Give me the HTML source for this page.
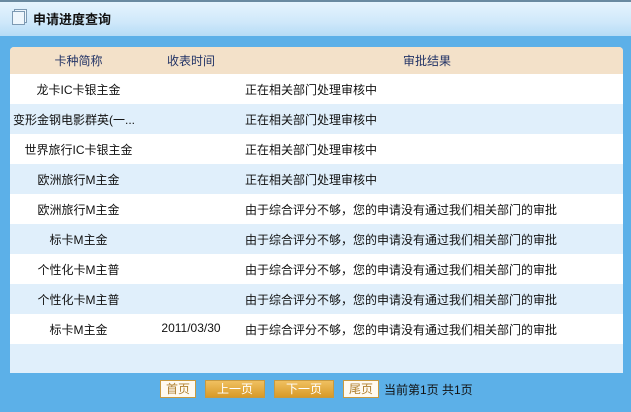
<!DOCTYPE html><html><head><meta charset="utf-8"><style>
*{margin:0;padding:0;box-sizing:border-box}
body{width:631px;height:412px;overflow:hidden;background:#5cb0e8;font-family:"Liberation Sans","Noto Sans CJK SC",sans-serif;font-size:12px;color:#111;position:relative}
.title{position:absolute;left:0;top:0;width:631px;height:36px;background:linear-gradient(#e6f4fd,#cfe8fa 60%,#b5dcf6);border-top:2px solid #6a8aa0}
.title b{position:absolute;left:33px;top:7px;font-size:13px;color:#111}
.ic{position:absolute;left:12px;top:9px;width:13px;height:14px;border:1px solid #7d9ab3;background:#eef6fc;box-shadow:2px -2px 0 -1px #eef6fc,2px -2px 0 0 #7d9ab3}
.panel{position:absolute;left:10px;top:47px;width:613px;height:326px;background:#e0effb;border-radius:4px 4px 0 0;overflow:hidden}
.hd{height:27px;background:#f3e1c9;color:#223366;position:relative}
.row{height:30px;position:relative}
.row:nth-child(odd){background:#fff}
.row:nth-child(even){background:#e0effb}
.c1,.c2{position:absolute;text-align:center;top:7px;white-space:nowrap}
.c1{left:0;width:137px}.c2{left:137px;width:88px}
.c3{position:absolute;left:235px;top:7px}
.hd .c1,.hd .c2{top:5px}.hd .c3{left:393px;top:5px}
.ft{position:absolute;top:380px;left:160px;display:flex;align-items:center;gap:9px}
.b{height:18px;border:1px solid #c89a40;font-size:12px;text-align:center;line-height:16px}
.w{background:#fffaf0;color:#b08030;width:36px}
.o{background:linear-gradient(#f0c060,#d89a28);color:#fff;width:60px}
</style></head><body>
<div class="title"><div class="ic"></div><b>申请进度查询</b></div>
<div class="panel">
<div class="hd"><span class="c1">卡种简称</span><span class="c2">收表时间</span><span class="c3">审批结果</span></div>
<div>
<div class="row"><span class="c1">龙卡IC卡银主金</span><span class="c3">正在相关部门处理审核中</span></div>
<div class="row"><span class="c1" style="text-align:left;left:3px">变形金钢电影群英(一...</span><span class="c3">正在相关部门处理审核中</span></div>
<div class="row"><span class="c1">世界旅行IC卡银主金</span><span class="c3">正在相关部门处理审核中</span></div>
<div class="row"><span class="c1">欧洲旅行M主金</span><span class="c3">正在相关部门处理审核中</span></div>
<div class="row"><span class="c1">欧洲旅行M主金</span><span class="c3">由于综合评分不够，您的申请没有通过我们相关部门的审批</span></div>
<div class="row"><span class="c1">标卡M主金</span><span class="c3">由于综合评分不够，您的申请没有通过我们相关部门的审批</span></div>
<div class="row"><span class="c1">个性化卡M主普</span><span class="c3">由于综合评分不够，您的申请没有通过我们相关部门的审批</span></div>
<div class="row"><span class="c1">个性化卡M主普</span><span class="c3">由于综合评分不够，您的申请没有通过我们相关部门的审批</span></div>
<div class="row"><span class="c1">标卡M主金</span><span class="c2">2011/03/30</span><span class="c3">由于综合评分不够，您的申请没有通过我们相关部门的审批</span></div>
</div></div>
<div class="ft"><div class="b w">首页</div><div class="b o">上一页</div><div class="b o">下一页</div><div class="b w">尾页</div><span style="color:#111;margin-left:-4px">当前第1页 共1页</span></div>
</body></html>
